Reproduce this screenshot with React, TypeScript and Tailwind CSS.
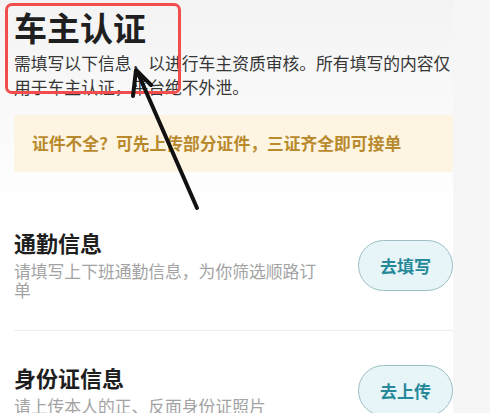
import React from "react";

function Banner({ children }: { children: string }) {
  return (
    <div className="mt-[16px] flex h-[57px] items-center rounded-[2px] bg-[#fdf4e1] pl-[18px] text-[16.8px] font-bold leading-none text-[#b98a2d]">
      {children}
    </div>
  );
}

function InfoRow({
  title,
  desc,
  action,
  divider = false,
}: {
  title: string;
  desc: string;
  action: string;
  divider?: boolean;
}) {
  return (
    <div
      className={
        "flex items-center pt-[34px] pb-[30px]" +
        (divider ? " border-b border-[#ededed]" : "")
      }
    >
      <div className="w-[310px]">
        <div className="text-[22px] font-bold leading-[22px] text-[#1e1e1e]">
          {title}
        </div>
        <div className="mt-[9px] text-[16.8px] leading-[19px] text-[#a3a3a3]">
          {desc}
        </div>
      </div>
      <div className="ml-auto flex h-[51px] w-[95px] items-center justify-center rounded-full border border-[#9dbfc6] bg-[#e7f4f8] text-[17px] font-bold text-[#26899a]">
        {action}
      </div>
    </div>
  );
}

export default function App() {
  return (
    <div className="relative flex h-[413px] w-[490px] overflow-hidden bg-[#f6f6f6] font-['Noto_Sans_CJK_SC',sans-serif]">
      <div className="w-[453px] bg-gradient-to-b from-[#f3f3f3] via-white to-white pl-[14px]">
        <div className="pt-[11px] text-[33px] font-bold leading-[33px] text-[#1f1f1f]">
          车主认证
        </div>
        <div className="mt-[7px] text-[16.8px] leading-[24px] text-[#363636]">
          需填写以下信息，以进行车主资质审核。所有填写的内容仅用于车主认证，平台绝不外泄。
        </div>
        <Banner>证件不全？可先上传部分证件，三证齐全即可接单</Banner>
        <div className="mt-[25px]">
          <InfoRow
            title="通勤信息"
            desc="请填写上下班通勤信息，为你筛选顺路订单"
            action="去填写"
            divider
          />
          <InfoRow
            title="身份证信息"
            desc="请上传本人的正、反面身份证照片"
            action="去上传"
          />
        </div>
      </div>
      <div className="flex-1" />

      {/* annotation overlay */}
      <div className="pointer-events-none absolute left-[5px] top-[3px] h-[91px] w-[176px] rounded-[7px] border-[3px] border-[#f24c4c]" />
      <svg
        className="pointer-events-none absolute left-0 top-0"
        width="490"
        height="413"
        viewBox="0 0 490 413"
      >
        <path
          d="M197 208 L137 71 M133 96 L136 70 L151 85"
          stroke="#111"
          strokeWidth="4"
          strokeLinecap="round"
          strokeLinejoin="round"
          fill="none"
        />
      </svg>
    </div>
  );
}
